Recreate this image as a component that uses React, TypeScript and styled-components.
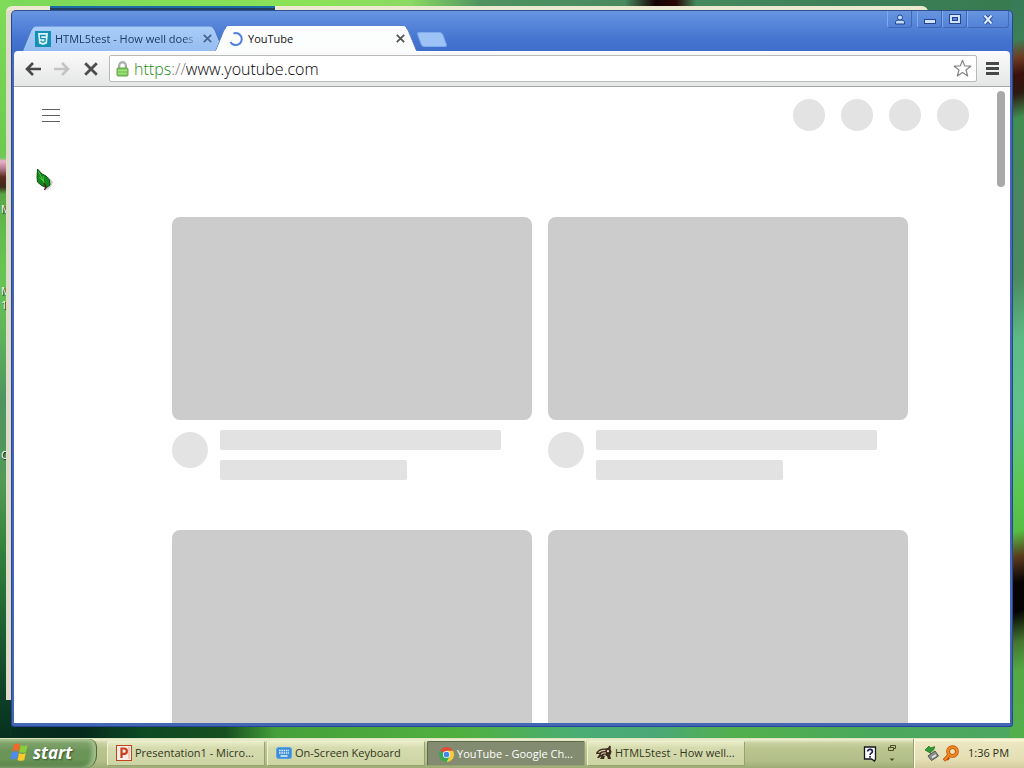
import React from "react";
import styled, { createGlobalStyle } from "styled-components";

const uiFont = `"Open Sans", "Noto Sans", sans-serif`;

const GlobalStyle = createGlobalStyle`
  * { box-sizing: border-box; }
  body { margin: 0; font-family: ${uiFont}; font-size: 11px; line-height: 16px; }
  button { font: inherit; color: inherit; margin: 0; padding: 0; border: 0; background: none; }
  svg { display: block; flex: none; }
`;

const Screen = styled.div`
  display: flex;
  flex-direction: column;
  height: 100vh;
  min-height: 480px;
  overflow: hidden;
`;

const Desktop = styled.main`
  position: relative;
  flex: 1;
  min-height: 0;
  overflow: hidden;
  background:
    linear-gradient(to bottom, #7fdc58 0, #6cca50 150px, #74c95c 158px, #e9b4cc 161px, #b97f92 168px, #5a2c20 177px, #3f2a18 187px, #57a548 194px, #62b84a 220px, #68c552 270px, #5fb55a 330px, #4f9460 400px, #539a58 480px, #2f7d3a 560px, #1a5a30 640px, #0d3e26 700px, #07301f 100%) left top / 12px 100% no-repeat,
    linear-gradient(165deg, #377a58 0, #3d7f56 40px, #6e3a22 58px, #3a100b 74px, #2d1a10 92px, #418d50 116px, #4a8560 200px, #4a8a5e 270px, #5dbb86 330px, #60c489 400px, #5bc74d 480px, #56bd44 515px, #5a3a1c 540px, #080302 565px, #040202 592px, #45752f 622px, #55a844 650px, #51b04c 100%) right top / 14px 100% no-repeat,
    linear-gradient(to right, #7bd95a 0, #8ae356 30%, #8ada62 40%, #4f9360 47%, #488a5f 61%, #150202 64%, #2a0604 66%, #448a5c 68%, #3d7f58 84%, #377a50 100%) left top / 100% 12px no-repeat,
    linear-gradient(to right, #05301f 0, #06291c 8%, #0d4a22 14%, #174f20 22%, #45a03a 27%, #4fb03e 45%, #4aae72 56%, #4aa877 64%, #52b04c 72%, #4aa85c 85%, #4ca760 100%) left bottom / 100% 14px no-repeat,
    #5fb550;
`;

const IconLabel = styled.span<{ $top: number }>`
  position: absolute;
  top: ${(p) => p.$top}px;
  left: 1px;
  line-height: 14px;
  color: #fff;
  text-shadow: 1px 1px 1px #000;
`;

const BackWindow = styled.div`
  position: absolute;
  top: 6px;
  left: 6px;
  bottom: 38px;
  width: 90%;
  border-radius: 6px 6px 0 0;
  background: #dedcc8;
  border-top: 4px solid #ece9d0;
`;

const BackWindowTab = styled.div`
  position: absolute;
  top: 6px;
  left: 50px;
  width: 22%;
  height: 4px;
  background: #1c6fa6;
  border-bottom: 2px solid #21405c;
`;

const Browser = styled.section`
  position: absolute;
  inset: 10px 11px 11px 11px;
  display: flex;
  flex-direction: column;
  padding: 0 2px 3px;
  border: 1px solid #24459a;
  border-top-color: #2f4f8e;
  border-radius: 5px 5px 3px 3px;
  background: linear-gradient(#6795e0 0, #5584d9 14px, #4473cf 30px, #3f6dcb 40px, #4768b8 60px, #4467b4 100%);
`;

const TitleBar = styled.header`
  display: flex;
  align-items: flex-end;
  justify-content: space-between;
  height: 40px;
  flex: none;
`;

const TabStrip = styled.div`
  display: flex;
  align-items: flex-end;
  padding-left: 8px;
`;

const Tab = styled.div<{ $active?: boolean }>`
  position: relative;
  z-index: ${(p) => (p.$active ? 1 : 0)};
  display: flex;
  align-items: center;
  gap: 4px;
  width: 202px;
  height: 25px;
  margin-right: -9px;
  padding: 0 11px 0 13px;
  color: ${(p) => (p.$active ? "#111" : "#1d3a66")};

  &::before,
  &::after {
    content: "";
    position: absolute;
    z-index: -1;
    top: 0;
    bottom: 0;
    width: 52%;
    background: ${(p) => (p.$active ? "#fcfdfd" : "linear-gradient(#a9cdf8, #96bdf0)")};
    border-top: 1px solid ${(p) => (p.$active ? "#fff" : "#7ba4e2")};
  }
  &::before {
    left: 5px;
    border-left: 1px solid #4f78c0;
    border-radius: 5px 0 0 0;
    transform: skewX(-22deg);
  }
  &::after {
    right: 5px;
    border-right: 1px solid #4f78c0;
    border-radius: 0 5px 0 0;
    transform: skewX(22deg);
  }
`;

const TabTitle = styled.span<{ $fade?: boolean }>`
  flex: 1;
  min-width: 0;
  overflow: hidden;
  white-space: nowrap;
  ${(p) => p.$fade && "mask-image: linear-gradient(to right, #000 90%, transparent);"}
`;

const TabClose = styled.button`
  display: grid;
  place-items: center;
  width: 11px;
  height: 16px;
`;

const NewTab = styled.button`
  width: 26px;
  height: 15px;
  margin: 0 0 4px 11px;
  border: 1px solid #7fabec;
  border-radius: 3px;
  background: #9dc3f6;
  transform: skewX(20deg);
`;

const WindowButtons = styled.div`
  display: flex;
  align-self: flex-start;
  margin-right: 1px;
`;

const WindowButton = styled.button<{ $wide?: boolean; $apart?: boolean }>`
  display: grid;
  place-items: center;
  width: ${(p) => (p.$wide ? 42 : 25)}px;
  height: 17px;
  margin-right: ${(p) => (p.$apart ? 5 : 0)}px;
  border: 1px solid #4168b5;
  border-top: 0;
  border-left-color: #83aaea;
  border-radius: 0 0 3px 3px;
`;

const Toolbar = styled.nav`
  display: flex;
  align-items: center;
  flex: none;
  height: 36px;
  padding: 0 8px 0 4px;
  border-bottom: 1px solid #a5a5a5;
  border-radius: 4px 4px 0 0;
  background: linear-gradient(#fbfbfb, #e5e6e6);
`;

const ToolButton = styled.button`
  display: grid;
  place-items: center;
  width: 29px;
  height: 28px;
`;

const AddressBar = styled.label`
  display: flex;
  align-items: center;
  flex: 1;
  min-width: 0;
  height: 27px;
  margin: 0 5px 0 4px;
  padding: 0 4px 0 6px;
  border: 1px solid #b9b9b9;
  border-radius: 2px;
  background: #fff;
  font-size: 16px;
  font-weight: 300;
  line-height: 24px;
`;

const Scheme = styled.span`
  margin-left: 5px;
  color: #1f8a16;
`;

const Slashes = styled.span`
  color: #757575;
`;

const AddressInput = styled.input`
  flex: 1;
  min-width: 0;
  height: 24px;
  padding: 0;
  border: 0;
  outline: 0;
  background: none;
  font: inherit;
  color: #000;
`;

const MenuButton = styled(ToolButton)`
  width: 20px;
`;

const Page = styled.div`
  display: flex;
  flex-direction: column;
  flex: 1;
  min-height: 0;
  position: relative;
  overflow: hidden;
  background: #fff;
`;

const Masthead = styled.div`
  display: flex;
  flex: none;
  align-items: center;
  justify-content: space-between;
  height: 56px;
  padding: 0 41px 0 28px;
`;

const Guide = styled.button`
  display: flex;
  flex-direction: column;
  gap: 5px;
  width: 18px;
`;

const GuideLine = styled.span`
  height: 1px;
  background: #606060;
`;

const MastheadIcons = styled.div`
  display: flex;
  gap: 16px;
`;

const Circle = styled.div<{ $size: number }>`
  flex: none;
  width: ${(p) => p.$size}px;
  height: ${(p) => p.$size}px;
  border-radius: 50%;
  background: #e3e3e3;
`;

const Feed = styled.div`
  display: grid;
  grid-template-columns: repeat(auto-fill, 360px);
  justify-content: center;
  gap: 50px 16px;
  padding: 74px 0 0 56px;
`;

const Thumb = styled.div`
  height: 203px;
  border-radius: 8px;
  background: #ccc;
`;

const Details = styled.div`
  display: flex;
  gap: 12px;
  padding-top: 12px;
`;

const Lines = styled.div`
  display: flex;
  flex-direction: column;
  flex: 1;
  gap: 10px;
  margin-top: -2px;
`;

const Line = styled.div<{ $width: number }>`
  width: ${(p) => p.$width}%;
  height: 20px;
  border-radius: 2px;
  background: #e2e2e2;
`;

const ScrollThumb = styled.div`
  position: absolute;
  top: 4px;
  right: 5px;
  width: 8px;
  height: 96px;
  border-radius: 4px;
  background: #a9a9a9;
`;

const Pointer = styled.svg`
  position: absolute;
  left: 36px;
  top: 168px;
`;

const Taskbar = styled.footer`
  display: flex;
  align-items: stretch;
  flex: none;
  height: 30px;
  border-top: 1px solid #dfe3bd;
  background: linear-gradient(#f0f2d4 0, #c9d1a0 4px, #b9c48f 10px, #b3bf88 22px, #9dab74 100%);
  color: #2c2f18;
`;

const StartButton = styled.button`
  display: flex;
  align-items: center;
  gap: 4px;
  width: 97px;
  padding: 0 0 2px 10px;
  border-right: 1px solid #4d6a3a;
  border-radius: 0 8px 12px 0;
  background: linear-gradient(#a9c592 0, #7fa36b 4px, #6b9459 12px, #6a9557 20px, #567f46 100%);
  box-shadow: inset -4px 0 4px #a3bf8c;
  color: #fff;
  font: italic bold 17px/24px ${uiFont};
  text-shadow: 1px 1px 2px #33512a;
`;

const Tasks = styled.div`
  display: flex;
  align-items: center;
  flex: 1;
  gap: 2px;
  min-width: 0;
  padding-left: 10px;
`;

const Task = styled.button<{ $active?: boolean }>`
  display: flex;
  align-items: center;
  flex: 0 1 158px;
  gap: 3px;
  min-width: 0;
  height: 25px;
  padding: ${(p) => (p.$active ? "1px 4px 0 11px" : "0 4px 1px 8px")};
  overflow: hidden;
  white-space: nowrap;
  border: 1px solid ${(p) => (p.$active ? "#5f6b4c" : "#eef1d2")};
  border-right-color: #96a070;
  border-bottom-color: #96a070;
  border-radius: 2px;
  background: ${(p) => (p.$active ? "#838c70" : "linear-gradient(#e8ecc6, #d5dbae 6px, #cdd4a3)")};
  color: ${(p) => (p.$active ? "#fff" : "#33371c")};
`;

const LanguageBar = styled.div`
  display: flex;
  align-items: center;
  gap: 11px;
  padding-right: 17px;
`;

const Tray = styled.div`
  display: flex;
  align-items: center;
  gap: 2px;
  width: 111px;
  padding: 0 0 1px 10px;
  border-left: 1px solid #9aa072;
  background: linear-gradient(#fbf8dc 0, #ebe6bf 4px, #e6dfb5 20px, #d3cca0 100%);
  box-shadow: inset 1px 0 0 #fffdea;
`;

const Clock = styled.time`
  margin-left: 7px;
  white-space: nowrap;
`;

const Cross = ({ color }: { color: string }) => (
  <svg width="9" height="9" viewBox="0 0 9 9" aria-hidden="true">
    <path d="M.8.8l7.400 7.400M8.200.8L.8 8.200" stroke={color} strokeWidth="1.800" />
  </svg>
);

const Html5Icon = () => (
  <svg width="16" height="16" viewBox="0 0 16 16" aria-hidden="true">
    <rect width="16" height="16" fill="#1590b5" />
    <path d="M3 2h10l-1 10.500-4 1.500-4-1.500z" fill="#dff4fa" />
    <path d="M10.800 4.500H5.500l.3 3.200h4.400l-.3 2.900-1.900.7-1.900-.7-.1-1" fill="none" stroke="#1590b5" strokeWidth="1.300" />
  </svg>
);

const Spinner = () => (
  <svg width="16" height="16" viewBox="0 0 16 16" aria-hidden="true">
    <path d="M5.500 2.500a6 6 0 1 1-3 8.500" fill="none" stroke="#4f7fe0" strokeWidth="2" />
  </svg>
);

const Arrow = ({ color, flip }: { color: string; flip?: boolean }) => (
  <svg width="16" height="14" viewBox="0 0 16 14" aria-hidden="true">
    <path
      d={flip ? "M0 7h13M8 1l6 6-6 6" : "M16 7H3M8 1L2 7l6 6"}
      fill="none"
      stroke={color}
      strokeWidth="2.600"
    />
  </svg>
);

const StopIcon = () => (
  <svg width="14" height="14" viewBox="0 0 14 14" aria-hidden="true">
    <path d="M1.200 1.200l11.600 11.600M12.800 1.200L1.200 12.800" stroke="#4d4d4d" strokeWidth="2.800" />
  </svg>
);

const LockIcon = () => (
  <svg width="13" height="16" viewBox="0 0 13 16" aria-hidden="true">
    <path d="M3.200 8V4.500a3.300 3.300 0 0 1 6.600 0V8" fill="none" stroke="#87918a" strokeWidth="2" />
    <path d="M3.200 8V4.500a3.300 3.300 0 0 1 6.600 0V8" fill="none" stroke="#c9cfc8" strokeWidth=".7" />
    <rect x="1" y="7" width="11" height="8" rx="1" fill="#86cd62" stroke="#5fa548" />
    <path d="M2 9.500h9M2 12.500h9" stroke="#a6e283" />
  </svg>
);

const StarIcon = () => (
  <svg width="19" height="19" viewBox="0 0 19 19" aria-hidden="true">
    <path
      d="M9.500 1.200l2.200 5.700 6.100.3-4.800 3.800 1.700 6-5.200-3.400L4.300 17 6 11 1.200 7.200l6.100-.3z"
      fill="#fff"
      stroke="#858585"
      strokeWidth="1.200"
      strokeLinejoin="round"
    />
  </svg>
);

const MenuIcon = () => (
  <svg width="13" height="13" viewBox="0 0 13 13" aria-hidden="true">
    <path d="M0 1.500h13M0 6.500h13M0 11.500h13" stroke="#484848" strokeWidth="3" />
  </svg>
);

const PersonIcon = () => (
  <svg width="12" height="11" viewBox="0 0 12 11" aria-hidden="true">
    <path d="M1.500 10V8.200C1.500 6.800 3 6 6 6s4.500.8 4.500 2.200V10z" fill="#c3dcfb" stroke="#1f4187" />
    <circle cx="6" cy="3.500" r="2.500" fill="#c3dcfb" stroke="#1f4187" />
  </svg>
);

const MinimizeIcon = () => (
  <svg width="12" height="12" viewBox="0 0 12 12" aria-hidden="true">
    <rect x=".5" y="6.500" width="11" height="4" fill="#cfe3fd" stroke="#24458c" />
  </svg>
);

const RestoreIcon = () => (
  <svg width="12" height="10" viewBox="0 0 12 10" aria-hidden="true">
    <rect x=".5" y=".5" width="11" height="9" fill="#cfe3fd" stroke="#24458c" />
    <rect x="3.500" y="3.500" width="5" height="3" fill="#5584d9" stroke="#24458c" />
  </svg>
);

const CloseIcon = () => (
  <svg width="12" height="11" viewBox="0 0 12 11" aria-hidden="true">
    <path d="M2.500 1.500l7 8M9.500 1.500l-7 8" stroke="#24458c" strokeWidth="4" />
    <path d="M2.500 1.500l7 8M9.500 1.500l-7 8" stroke="#dcebff" strokeWidth="2.200" />
  </svg>
);

const WindowsFlag = () => (
  <svg width="19" height="19" viewBox="0 0 19 19" aria-hidden="true">
    <path d="M4 1.500c2-1.400 4.200-1.200 6 0L8.600 8.600C6.600 7.300 4.700 7.300 2.200 8.500z" fill="#f0682c" />
    <path d="M10.700 2c2.200 1.200 4.500 1.200 7 0l-1.700 7c-2.400 1.200-4.500 1.100-6.700 0z" fill="#8bcb3c" />
    <path d="M2 9.400c2.200-1.200 4.300-1.200 6.300 0L6.800 16.500c-2-1.200-4-1.100-6.400 0z" fill="#4d8bf0" />
    <path d="M9 10c2.200 1.200 4.300 1.200 6.800 0l-1.600 7c-2.400 1.200-4.600 1.100-6.700 0z" fill="#fbc92a" />
  </svg>
);

const PowerPointIcon = () => (
  <svg width="16" height="16" viewBox="0 0 16 16" aria-hidden="true">
    <rect x=".5" y=".5" width="15" height="15" fill="#fbeee6" stroke="#c2411f" />
    <path d="M13 2v12" stroke="#e3a58f" />
    <path d="M5.500 13V3.500h2.700a2.600 2.600 0 0 1 0 5.300H5.500" fill="none" stroke="#c8401c" strokeWidth="2.200" />
  </svg>
);

const KeyboardIcon = () => (
  <svg width="16" height="16" viewBox="0 0 16 16" aria-hidden="true">
    <rect x=".5" y="2.500" width="15" height="11" rx="2" fill="#3d8ed8" stroke="#5da5e2" />
    <path d="M3 5.500h10M3 8h10" stroke="#e9f5ff" strokeWidth="1.500" strokeDasharray="1.500 .8" />
    <path d="M4.500 11h7" stroke="#e9f5ff" strokeWidth="1.500" />
  </svg>
);

const ChromeIcon = () => (
  <svg width="15" height="15" viewBox="0 0 16 16" aria-hidden="true">
    <path d="M8 8L1.100 4A8 8 0 0 1 14.900 4z" fill="#e04a3a" />
    <path d="M8 8V4h6.900A8 8 0 0 1 8 16z" fill="#f7cd3c" />
    <path d="M8 8l3.500 2L8 16A8 8 0 0 1 1.100 4z" fill="#38a853" />
    <circle cx="8" cy="8" r="3.800" fill="#fff" />
    <circle cx="8" cy="8" r="3" fill="#4584e8" />
  </svg>
);

const MaskIcon = () => (
  <svg width="16" height="16" viewBox="0 0 16 16" aria-hidden="true">
    <path d="M.5 7C3 4 6 3 9 3.500L12 3l1.500-2.500 1.500 1-.5 2.500 1 2.500-.5 2.500L14 10l1 4h-3l-1-3-2-.5L8 14H4l1.500-3L3 13H1l2.500-4L0 9z" fill="#3f2c20" />
    <path d="M2.500 7.500C5 5.500 7 5 9.500 5.500M5 9.500c1-1.500 3-1.800 5-1.500M7.500 10.500l2-.5" fill="none" stroke="#d7c9a4" strokeWidth="1.100" />
    <circle cx="12" cy="6.200" r="1.100" fill="#f3ead0" />
  </svg>
);

const HelpIcon = () => (
  <svg width="14" height="16" viewBox="0 0 14 16" aria-hidden="true">
    <path d="M1.500 1h11v12l-1 2-3-2h-7z" fill="#fff" stroke="#15151f" strokeWidth="1.300" />
    <path d="M4.700 5.500c0-3 4.700-2.800 4.700 0C9.400 7.200 7 7 7 9M7 10v1.800" fill="none" stroke="#181c50" strokeWidth="1.700" />
  </svg>
);

const BarOptionsIcon = () => (
  <svg width="8" height="18" viewBox="0 0 8 18" aria-hidden="true">
    <path d="M2.500 2.500V.5h5v3h-2M.5 2.500h5v3h-5z" fill="none" stroke="#4a4a22" />
    <path d="M1.500 13.500h5L4 16z" fill="#4a4a22" />
  </svg>
);

const EjectIcon = () => (
  <svg width="16" height="16" viewBox="0 0 16 16" aria-hidden="true">
    <path d="M4 11l7-5 3.500 5-7 4.500z" fill="#8b8f8d" stroke="#4f5452" />
    <path d="M8 12.500l4-2.500" stroke="#e4e7e2" strokeWidth="1.500" />
    <path d="M1 5l4-4 1 2c2-.8 3-.5 4.500-1.500C10.500 5 8.500 6.500 6.500 6.500l.5 2z" fill="#2f9c34" stroke="#1d6a25" strokeWidth=".7" />
  </svg>
);

const KeyIcon = () => (
  <svg width="17" height="17" viewBox="0 0 17 17" aria-hidden="true">
    <circle cx="10.500" cy="6.500" r="4.400" fill="none" stroke="#b6500a" strokeWidth="3.800" />
    <path d="M7 10l-5 5.500M4 12l3 2.500" stroke="#b6500a" strokeWidth="3.400" />
    <circle cx="10.500" cy="6.500" r="4.400" fill="none" stroke="#f5871f" strokeWidth="2.300" />
    <path d="M7 10l-4.500 5" stroke="#f5871f" strokeWidth="2" />
  </svg>
);

const LeafPointer = () => (
  <Pointer width="18" height="24" viewBox="0 0 18 24" aria-hidden="true">
    <path d="M5 5l7 4 5 5-2 5-4 3-7-6z" fill="#000" opacity=".2" />
    <path d="M1.500 1l4.500 5 4 2 3.500 4 .5 5-3.500 2.500-5-2L1.500 14 1 9z" fill="#12881b" stroke="#08520d" />
    <path d="M2.500 3.500l6 12M7 8l.5 5M3 9l4 4" fill="none" stroke="#49bd45" />
    <path d="M8 15l2 4-1.500 3" fill="none" stroke="#4a2018" strokeWidth="1.500" />
  </Pointer>
);

const tasks = [
  { label: "Presentation1 - Micro...", icon: <PowerPointIcon /> },
  { label: "On-Screen Keyboard", icon: <KeyboardIcon /> },
  { label: "YouTube - Google Ch...", icon: <ChromeIcon />, active: true },
  { label: "HTML5test - How well...", icon: <MaskIcon /> },
];

const VideoPlaceholder = () => (
  <div>
    <Thumb />
    <Details>
      <Circle $size={36} />
      <Lines>
        <Line $width={90} />
        <Line $width={60} />
      </Lines>
    </Details>
  </div>
);

export default function App() {
  return (
    <Screen>
      <GlobalStyle />
      <Desktop>
        <IconLabel $top={202}>M</IconLabel>
        <IconLabel $top={284}>
          M
          <br />
          1
        </IconLabel>
        <IconLabel $top={448}>C</IconLabel>
        <BackWindow />
        <BackWindowTab />
        <Browser>
          <TitleBar>
            <TabStrip>
              <Tab>
                <Html5Icon />
                <TabTitle $fade>HTML5test - How well does y</TabTitle>
                <TabClose aria-label="Close HTML5test tab">
                  <Cross color="#4b6791" />
                </TabClose>
              </Tab>
              <Tab $active>
                <Spinner />
                <TabTitle>YouTube</TabTitle>
                <TabClose aria-label="Close YouTube tab">
                  <Cross color="#555" />
                </TabClose>
              </Tab>
              <NewTab aria-label="New tab" />
            </TabStrip>
            <WindowButtons>
              <WindowButton $apart aria-label="Profile"><PersonIcon /></WindowButton>
              <WindowButton aria-label="Minimize"><MinimizeIcon /></WindowButton>
              <WindowButton aria-label="Restore"><RestoreIcon /></WindowButton>
              <WindowButton $wide aria-label="Close"><CloseIcon /></WindowButton>
            </WindowButtons>
          </TitleBar>
          <Toolbar>
            <ToolButton aria-label="Back"><Arrow color="#4a4a4a" /></ToolButton>
            <ToolButton aria-label="Forward" disabled><Arrow color="#c4c4c4" flip /></ToolButton>
            <ToolButton aria-label="Stop loading"><StopIcon /></ToolButton>
            <AddressBar>
              <LockIcon />
              <Scheme>https</Scheme>
              <Slashes>://</Slashes>
              <AddressInput aria-label="Address" defaultValue="www.youtube.com" />
              <StarIcon />
            </AddressBar>
            <MenuButton aria-label="Menu"><MenuIcon /></MenuButton>
          </Toolbar>
          <Page>
            <Masthead>
              <Guide aria-label="Guide">
                <GuideLine />
                <GuideLine />
                <GuideLine />
              </Guide>
              <MastheadIcons>
                {[0, 1, 2, 3].map((n) => <Circle key={n} $size={32} />)}
              </MastheadIcons>
            </Masthead>
            <Feed>
              {[0, 1, 2, 3].map((n) => <VideoPlaceholder key={n} />)}
            </Feed>
            <ScrollThumb />
          </Page>
        </Browser>
        <LeafPointer />
      </Desktop>
      <Taskbar>
        <StartButton>
          <WindowsFlag />
          start
        </StartButton>
        <Tasks>
          {tasks.map((t) => (
            <Task key={t.label} $active={t.active}>
              {t.icon}
              {t.label}
            </Task>
          ))}
        </Tasks>
        <LanguageBar>
          <HelpIcon />
          <BarOptionsIcon />
        </LanguageBar>
        <Tray>
          <EjectIcon />
          <KeyIcon />
          <Clock>1:36 PM</Clock>
        </Tray>
      </Taskbar>
    </Screen>
  );
}
